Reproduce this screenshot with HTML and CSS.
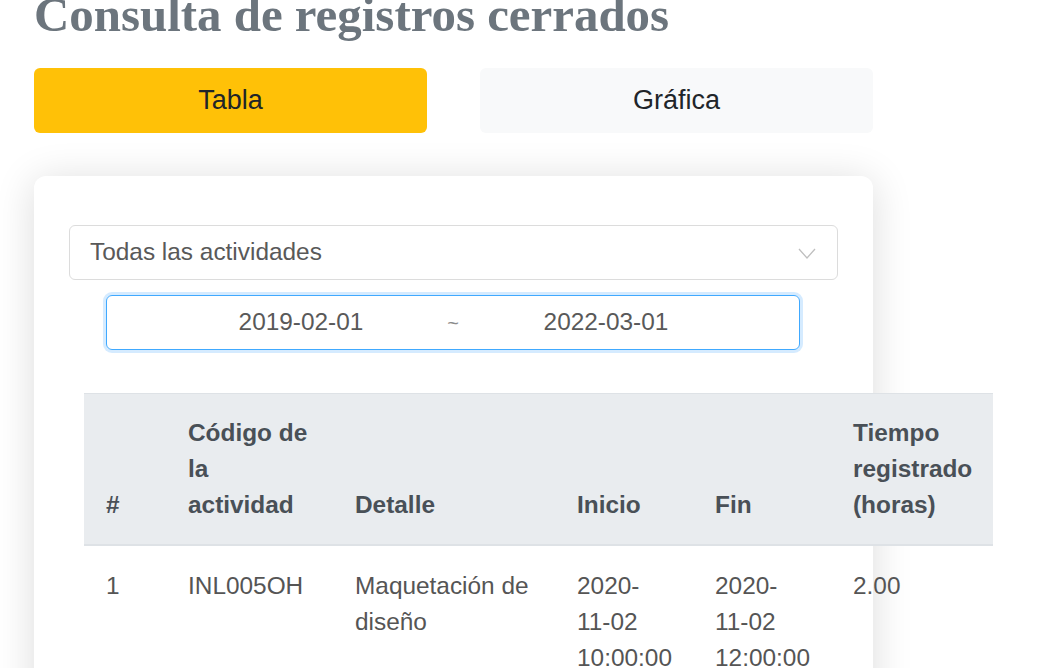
FILE: index.html
```html
<!DOCTYPE html>
<html lang="es">
<head>
<meta charset="utf-8">
<title>Consulta de registros cerrados</title>
<link rel="stylesheet" href="styles.css">
</head>
<body>
<div class="page">
  <h1 class="title">Consulta de registros cerrados</h1>
  <div class="tabs">
    <button class="tab tab-active">Tabla</button>
    <button class="tab tab-light">Gráfica</button>
  </div>
  <div class="card">
    <div class="select">
      <span class="select-text">Todas las actividades</span>
      <svg class="chevron" width="18" height="11" viewBox="0 0 18 11"><polyline points="1,1 9,10 17,1" fill="none" stroke="#bfbfbf" stroke-width="1.3"/></svg>
    </div>
    <div class="range">
      <span class="range-input range-start">2019-02-01</span>
      <span class="range-sep">~</span>
      <span class="range-input range-end">2022-03-01</span>
    </div>
    <table class="table">
      <colgroup>
        <col class="c1"><col class="c2"><col class="c3"><col class="c4"><col class="c5"><col class="c6">
      </colgroup>
      <thead>
        <tr>
          <th>#</th>
          <th>Código de la actividad</th>
          <th>Detalle</th>
          <th>Inicio</th>
          <th>Fin</th>
          <th>Tiempo registrado (horas)</th>
        </tr>
      </thead>
      <tbody>
        <tr>
          <td>1</td>
          <td>INL005OH</td>
          <td>Maquetación de diseño</td>
          <td>2020-11-02 10:00:00</td>
          <td>2020-11-02 12:00:00</td>
          <td>2.00</td>
        </tr>
      </tbody>
    </table>
  </div>
</div>
</body>
</html>
```

FILE: styles.css
```css
html, body {
  margin: 0;
  padding: 0;
  background: #ffffff;
}
body {
  font-family: "Liberation Sans", Arial, sans-serif;
  font-size: 24.4px;
  line-height: 1.5;
  color: #555555;
  overflow: hidden;
}
.page {
  width: 839px;
  padding-left: 34px;
}
.title {
  margin: -14px 0 24px 0;
  font-family: "Liberation Serif", "Times New Roman", serif;
  font-weight: bold;
  font-size: 48.9px;
  line-height: 58px;
  color: #6c757d;
  white-space: nowrap;
}
.tabs {
  display: grid;
  grid-template-columns: 393px 393px;
  column-gap: 53px;
}
.tab {
  height: 65px;
  border: none;
  border-radius: 6px;
  font-family: "Liberation Sans", Arial, sans-serif;
  font-size: 27px;
  color: #212529;
  padding: 0;
}
.tab-active { background: #ffc107; }
.tab-light { background: #f8f9fa; }
.card {
  margin-top: 43px;
  background: #ffffff;
  border-radius: 12px;
  box-shadow: 0 4px 40px rgba(0, 0, 0, 0.14);
  padding: 49px 35px 40px 35px;
  height: 600px;
}
.select {
  height: 53px;
  border: 1px solid #dcdcdc;
  border-radius: 6px;
  display: flex;
  align-items: center;
  justify-content: space-between;
  padding: 0 21px 0 20px;
}
.select-text { color: #595959; }
.chevron { margin-top: 2px; }
.range {
  margin: 15px 38px 0 37px;
  height: 53px;
  border: 1px solid #40a9ff;
  border-radius: 6px;
  box-shadow: 0 0 0 3px rgba(24, 144, 255, 0.18);
  display: grid;
  grid-template-columns: 1fr 20px 1fr;
  align-items: center;
}
.range-input { text-align: center; color: #595959; }
.range-start { padding-left: 52px; }
.range-end { padding-right: 50px; }
.range-sep { text-align: center; color: #8c8c8c; font-size: 20px; }
.table {
  margin: 43px 0 0 15px;
  width: 909px;
  border-collapse: collapse;
  table-layout: fixed;
}
.c1 { width: 82px; }
.c2 { width: 167px; }
.c3 { width: 222px; }
.c4 { width: 138px; }
.c5 { width: 138px; }
.c6 { width: 162px; }
.table th, .table td {
  padding: 21px 22px;
  text-align: left;
  vertical-align: bottom;
  line-height: 36px;
}
.table thead th {
  background: #e9ecef;
  color: #495057;
  font-weight: bold;
  border-top: 1px solid #dee2e6;
  border-bottom: 2px solid #dee2e6;
}
.table td {
  vertical-align: top;
  padding-top: 22px;
  color: #555555;
}
```
